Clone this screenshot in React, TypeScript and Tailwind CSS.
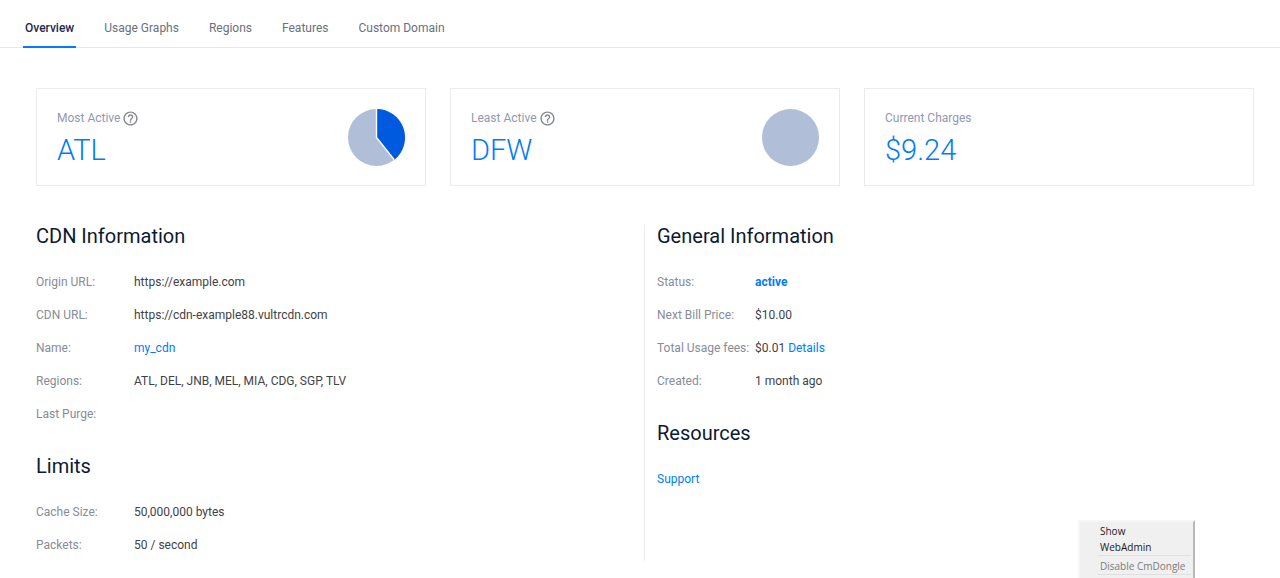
import React, { useState } from "react";
import { MdHelpOutline } from "react-icons/md";

const tabs = ["Overview", "Usage Graphs", "Regions", "Features", "Custom Domain"];

const Pie = ({ share }: { share: number }) => {
  const angle = share * 2 * Math.PI;
  const x = 50 + 50 * Math.sin(angle);
  const y = 50 - 50 * Math.cos(angle);
  return (
    <svg className="size-[57px] shrink-0" viewBox="0 0 100 100" aria-hidden="true">
      <circle cx="50" cy="50" r="50" fill="#b0bfd7" />
      {share > 0 && (
        <>
          <path d={`M50 50V0A50 50 0 0 1 ${x} ${y}Z`} fill="#005ae0" />
          <path d={`M50 0V50L${x} ${y}`} fill="none" stroke="#fff" strokeWidth="2.4" />
        </>
      )}
    </svg>
  );
};

type CardProps = {
  label: string;
  value: string;
  help?: boolean;
  share?: number;
};

const Card = ({ label, value, help, share }: CardProps) => (
  <div className="flex justify-between border border-[#ebebed] px-5 pt-5 pb-[17px]">
    <div>
      <div className="flex h-[18px] items-center gap-[2px] text-[#8e99b3]">
        {label}
        {help && (
          <button type="button" aria-label={`About ${label}`} className="text-[#85878a]">
            <MdHelpOutline size={17} />
          </button>
        )}
      </div>
      <div className="mt-[5px] text-[29px] leading-9 font-light text-[#007bfc]">{value}</div>
    </div>
    {share !== undefined && <Pie share={share} />}
  </div>
);

type SectionProps = {
  title: string;
  children: React.ReactNode;
};

const Section = ({ title, children }: SectionProps) => (
  <section>
    <h2 className="mb-[18px] text-xl leading-[22px] text-[#0b1a33]">{title}</h2>
    {children}
  </section>
);

const Row = ({ label, children }: { label: string; children?: React.ReactNode }) => (
  <div className="flex h-[33px] items-center">
    <dt className="w-[98px] shrink-0 whitespace-nowrap text-[#868c98]">{label}</dt>
    <dd className="text-[#3f4247]">{children}</dd>
  </div>
);

const Link = ({ children }: { children: React.ReactNode }) => (
  <a href="#" className="text-[#007bfc]">
    {children}
  </a>
);

export default function App() {
  const [active, setActive] = useState("Overview");

  return (
    <div className="relative min-h-screen overflow-hidden bg-white pb-4 font-[Roboto,sans-serif] text-xs leading-[18px]">
      <nav className="flex h-12 gap-[26px] border-b border-[#e8e8ea] pl-[23px]">
        {tabs.map((tab) => (
          <button
            key={tab}
            type="button"
            onClick={() => setActive(tab)}
            className={
              tab === active
                ? "-mb-px border-b-2 border-[#007bfc] px-[2px] pt-[10px] font-medium text-[#1b2b4d]"
                : "-mb-px border-b-2 border-transparent px-[2px] pt-[10px] text-[#69707f]"
            }
          >
            {tab}
          </button>
        ))}
      </nav>

      <main className="pt-10 pr-[26px] pl-9">
        <div className="grid grid-cols-3 gap-6">
          <Card label="Most Active" value="ATL" help share={0.393} />
          <Card label="Least Active" value="DFW" help share={0} />
          <Card label="Current Charges" value="$9.24" />
        </div>

        <div className="mt-[39px] grid grid-cols-2">
          <div className="flex flex-col gap-[25px] border-r border-[#ebebed]">
            <Section title="CDN Information">
              <dl>
                <Row label="Origin URL:">https://example.com</Row>
                <Row label="CDN URL:">https://cdn-example88.vultrcdn.com</Row>
                <Row label="Name:">
                  <Link>my_cdn</Link>
                </Row>
                <Row label="Regions:">ATL, DEL, JNB, MEL, MIA, CDG, SGP, TLV</Row>
                <Row label="Last Purge:" />
              </dl>
            </Section>
            <Section title="Limits">
              <dl>
                <Row label="Cache Size:">50,000,000 bytes</Row>
                <Row label="Packets:">50 / second</Row>
              </dl>
            </Section>
          </div>
          <div className="flex flex-col gap-[25px] pl-3">
            <Section title="General Information">
              <dl>
                <Row label="Status:">
                  <strong className="font-bold text-[#007bfc]">active</strong>
                </Row>
                <Row label="Next Bill Price:">$10.00</Row>
                <Row label="Total Usage fees:">
                  $0.01 <Link>Details</Link>
                </Row>
                <Row label="Created:">1 month ago</Row>
              </dl>
            </Section>
            <Section title="Resources">
              <div className="flex h-[33px] items-center">
                <Link>Support</Link>
              </div>
            </Section>
          </div>
        </div>
      </main>

      {/* tray menu, cut off by the bottom edge */}
      <div
        role="menu"
        className="absolute right-[85px] bottom-0 flex h-[58px] w-[117px] flex-col border-t-2 border-r-2 border-l-2 border-t-[#f6f6f6] border-r-[#b9b9b9] border-l-[#f6f6f6] bg-[#f0f0f0] pt-px pr-[2px] pl-[18px] font-['Open_Sans',sans-serif] text-[10px] leading-4 text-[#1a1a1a]"
      >
        <button type="button" role="menuitem" className="pl-[2px] text-left">
          Show
        </button>
        <button type="button" role="menuitem" className="pl-[2px] text-left">
          WebAdmin
        </button>
        <div className="h-px bg-[#e0e0e0]" />
        <button
          type="button"
          role="menuitem"
          disabled
          className="mt-[2px] pl-[2px] text-left whitespace-nowrap text-[#7b7b7b]"
        >
          Disable CmDongle
        </button>
        <div className="h-px bg-[#e0e0e0]" />
      </div>
    </div>
  );
}
